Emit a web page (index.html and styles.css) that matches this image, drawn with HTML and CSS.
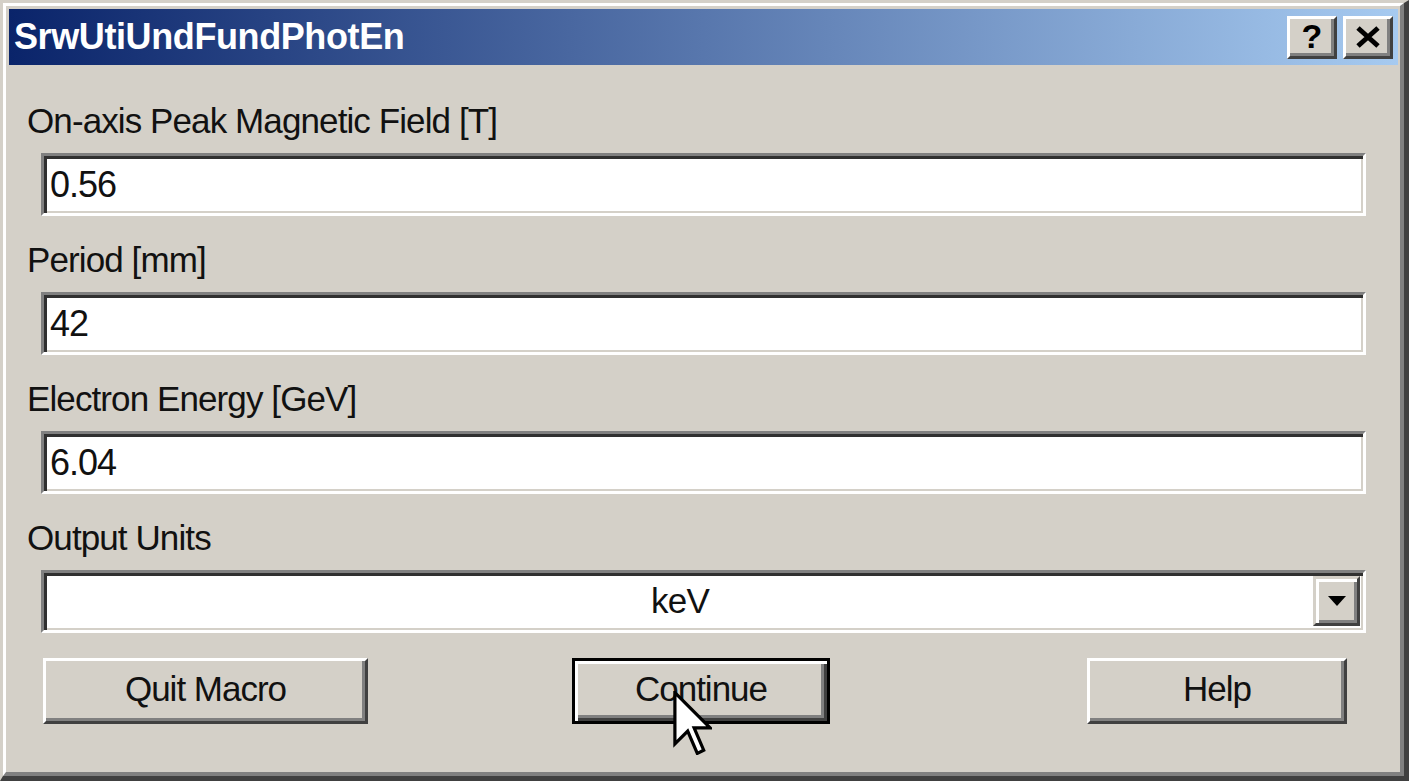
FILE: index.html
```html
<!DOCTYPE html>
<html>
<head>
<meta charset="utf-8">
<link rel="stylesheet" href="styles.css">
</head>
<body>
<div class="window">
  <div class="frame">
    <div class="titlebar">
      <span class="title">SrwUtiUndFundPhotEn</span>
      <div class="caption-buttons">
        <span class="cbtn cbtn-help">?</span>
        <span class="cbtn"><svg width="26" height="22" viewBox="0 0 26 22"><path d="M3 2 L23 20 M23 2 L3 20" stroke="#000" stroke-width="5" fill="none"/></svg></span>
      </div>
    </div>
    <div class="content">
      <div class="field">
        <div class="label">On-axis Peak Magnetic Field [T]</div>
        <div class="input">0.56</div>
      </div>
      <div class="field">
        <div class="label">Period [mm]</div>
        <div class="input">42</div>
      </div>
      <div class="field">
        <div class="label">Electron Energy [GeV]</div>
        <div class="input">6.04</div>
      </div>
      <div class="field field-last">
        <div class="label">Output Units</div>
        <div class="select">
          <span class="select-value">keV</span>
          <span class="select-arrow"><svg width="18" height="10" viewBox="0 0 18 10"><path d="M0 0 H18 L9 10 Z" fill="#000"/></svg></span>
        </div>
      </div>
      <div class="buttons">
        <div class="btn btn-quit">Quit Macro</div>
        <div class="btn btn-default btn-continue">Continue</div>
        <div class="btn btn-help">Help</div>
      </div>
    </div>
  </div>
  <svg class="cursor" width="39" height="64" viewBox="-0.5 -0.5 12 20"><path d="M0 0 L0 16 L4 12 L7 19 L9 18 L6 11 L11 11 Z" fill="#fff" stroke="#000" stroke-width="1" stroke-linejoin="miter"/></svg>
</div>
</body>
</html>
```

FILE: styles.css
```css
* { box-sizing: border-box; }

body {
  margin: 0;
  font-family: "Liberation Sans", Arial, sans-serif;
  color: #111;
}

.window {
  position: relative;
  width: 1409px;
  height: 781px;
  background: #d4d0c8;
  border-style: solid;
  border-width: 3px 5px 5px 3px;
  border-color: #d4d0c8 #404040 #404040 #d4d0c8;
}

.frame {
  height: 100%;
  border-style: solid;
  border-width: 3px 4px 4px 3px;
  border-color: #ffffff #808080 #808080 #ffffff;
  padding: 3px 2px 2px 3px;
}

.titlebar {
  height: 56px;
  display: flex;
  align-items: center;
  justify-content: space-between;
  padding: 0 5px;
  background: linear-gradient(to right, #0a246a 0%, #a6caf0 100%);
}

.title {
  color: #fff;
  font-weight: bold;
  font-size: 36px;
  letter-spacing: -0.4px;
  line-height: 40px;
}

.caption-buttons {
  display: flex;
  gap: 6px;
}

.cbtn {
  width: 50px;
  height: 43px;
  display: flex;
  align-items: center;
  justify-content: center;
  background: #d4d0c8;
  border-style: solid;
  border-width: 3px;
  border-color: #ffffff #404040 #404040 #ffffff;
  box-shadow: inset -3px -3px 0 #808080;
  font-weight: bold;
  font-size: 34px;
  line-height: 1;
  color: #000;
}

.cbtn-help {
  padding-bottom: 2px;
}

.content {
  padding: 36px 32px 0 18px;
}

.label {
  font-size: 35px;
  line-height: 40px;
  letter-spacing: -0.9px;
  white-space: nowrap;
}

.input,
.select {
  margin: 12px 0 24px 14px;
  height: 63px;
  background: #fff;
  border-style: solid;
  border-width: 3px;
  border-color: #808080 #ffffff #ffffff #808080;
  box-shadow: inset 3px 3px 0 #303030, inset -2px -2px 0 #d4d0c8;
  display: flex;
  align-items: center;
}

.input {
  padding-left: 6px;
  font-size: 36px;
  letter-spacing: -1px;
}

.field-last .select {
  margin-bottom: 25px;
}

.select {
  padding: 3px 3px 4px 3px;
}

.select-value {
  flex: 1;
  text-align: center;
  font-size: 35px;
  letter-spacing: -0.8px;
}

.select-arrow {
  width: 47px;
  height: 50px;
  display: flex;
  align-items: center;
  justify-content: center;
  background: #d4d0c8;
  border-style: solid;
  border-width: 3px;
  border-color: #d4d0c8 #404040 #404040 #d4d0c8;
  box-shadow: inset 3px 3px 0 #ffffff, inset -3px -3px 0 #808080;
}

.buttons {
  display: flex;
  margin-left: 16px;
}

.btn {
  height: 66px;
  display: flex;
  align-items: center;
  justify-content: center;
  background: #d4d0c8;
  border-style: solid;
  border-width: 3px;
  border-color: #ffffff #404040 #404040 #ffffff;
  box-shadow: inset -3px -3px 0 #808080;
  font-size: 35px;
  letter-spacing: -1px;
  padding-bottom: 4px;
}

.btn-default {
  border-color: #000;
  box-shadow: inset 3px 3px 0 #ffffff, inset -3px -3px 0 #404040, inset -6px -6px 0 #808080;
}

.btn-quit {
  width: 325px;
}

.btn-continue {
  width: 258px;
  margin-left: 204px;
}

.btn-help {
  width: 260px;
  margin-left: 257px;
}

.cursor {
  position: absolute;
  left: 670px;
  top: 688px;
}
```
